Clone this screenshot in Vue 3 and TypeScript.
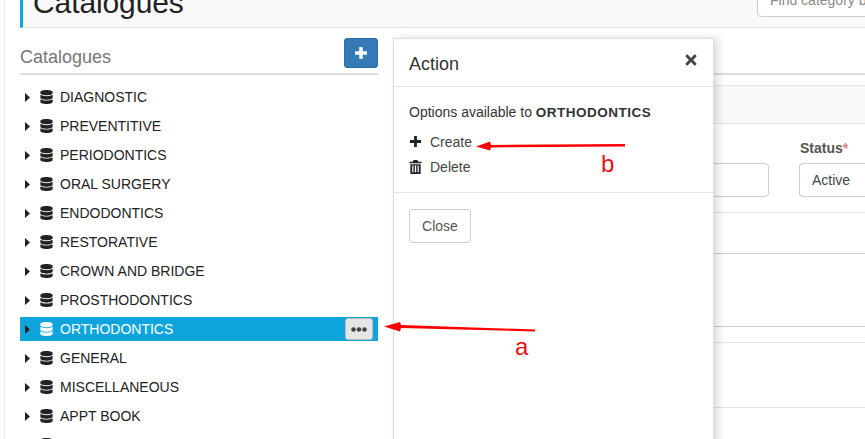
<template>
  <div class="page">
    <header class="page-header">
      <h1>Catalogues</h1>
      <input class="search" type="text" placeholder="Find category by name" />
    </header>

    <div class="columns">
      <aside class="tree">
        <div class="tree__head">
          <h2>Catalogues</h2>
          <button class="btn-add" type="button" aria-label="Add">
            <svg viewBox="0 0 14 14" width="12" height="12"><path d="M5 0h4v5h5v4H9v5H5V9H0V5h5z" fill="#fff" /></svg>
          </button>
        </div>
        <ul class="tree__list">
          <li v-for="item in catalogues" :key="item" class="tree__row" :class="{ 'is-active': item === selected }">
            <svg class="caret" viewBox="0 0 5 9" width="5" height="9"><path d="M0 0l5 4.5L0 9z" /></svg>
            <svg class="db" viewBox="0 0 448 512" width="13" height="14"><path :d="dbPath" /></svg>
            <span class="tree__name">{{ item }}</span>
            <button v-if="item === selected" class="btn-more" type="button" aria-label="More">
              <svg viewBox="0 0 16 5" width="16" height="5"><circle cx="2.5" cy="2.5" r="2.3" /><circle cx="8" cy="2.5" r="2.3" /><circle cx="13.5" cy="2.5" r="2.3" /></svg>
            </button>
          </li>
          <li class="tree__row">
            <svg class="caret" viewBox="0 0 5 9" width="5" height="9"><path d="M0 0l5 4.5L0 9z" /></svg>
            <svg class="db" viewBox="0 0 448 512" width="13" height="14"><path :d="dbPath" /></svg>
          </li>
        </ul>
      </aside>

      <section class="detail">
        <div class="detail__strip"></div>
        <div class="detail__form">
          <div class="field field--name">
            <input type="text" />
          </div>
          <div class="field field--status">
            <label>Status<span>*</span></label>
            <div class="select">Active</div>
          </div>
        </div>
        <div class="detail__block detail__block--a"></div>
        <div class="detail__block detail__block--b"></div>
        <div class="detail__block detail__block--c"></div>
        <div class="detail__block detail__block--d"></div>
      </section>
    </div>

    <div class="action">
      <div class="action__head">
        <span>Action</span>
        <svg viewBox="0 0 352 512" width="12" height="16"><path :d="timesPath" /></svg>
      </div>
      <div class="action__body">
        <p>Options available to <b>ORTHODONTICS</b></p>
        <div class="action__link">
          <svg viewBox="0 0 14 14" width="13" height="13"><path d="M5.5 1h3v4.5H13v3H8.5V13h-3V8.5H1v-3h4.5z" /></svg>
          Create
        </div>
        <div class="action__link">
          <svg viewBox="0 0 13 15" width="13" height="14"><path d="M4.5 0h4l1 2H13v1.5H0V2h3.500zM1 4.500h11V15H1zM3 6v7h1.300V6zm2.800 0v7h1.400V6zm2.900 0v7H10V6z" fill-rule="evenodd" /></svg>
          Delete
        </div>
      </div>
      <div class="action__foot">
        <button type="button">Close</button>
      </div>
    </div>

    <!-- annotations drawn over the screenshot -->
    <svg class="marks" viewBox="0 0 865 439" width="865" height="439">
      <path d="M535 329.5L401 325 400 322 384 326.500 400 331.500 401 328 535 331.500z" fill="#f00" />
      <path d="M625 144L491 145 490 141.500 476 146.500 490 150.500 491 147.500 625 146.500z" fill="#f00" />
    </svg>
    <span class="mark mark--a">a</span>
    <span class="mark mark--b">b</span>
  </div>
</template>

<script setup lang="ts">
const selected = 'ORTHODONTICS';

const catalogues: string[] = [
  'DIAGNOSTIC',
  'PREVENTITIVE',
  'PERIODONTICS',
  'ORAL SURGERY',
  'ENDODONTICS',
  'RESTORATIVE',
  'CROWN AND BRIDGE',
  'PROSTHODONTICS',
  'ORTHODONTICS',
  'GENERAL',
  'MISCELLANEOUS',
  'APPT BOOK',
];

const dbPath =
  'M448 73.143v45.714C448 159.143 347.667 192 224 192S0 159.143 0 118.857V73.143C0 32.857 100.333 0 224 0s224 32.857 224 73.143zM448 176v102.857C448 319.143 347.667 352 224 352S0 319.143 0 278.857V176c48.125 33.143 136.208 48.572 224 48.572S399.874 209.143 448 176zm0 160v102.857C448 479.143 347.667 512 224 512S0 479.143 0 438.857V336c48.125 33.143 136.208 48.572 224 48.572S399.874 369.143 448 336z';

const timesPath =
  'M242.72 256l100.07-100.07c12.28-12.28 12.28-32.19 0-44.48l-22.24-22.24c-12.28-12.28-32.19-12.28-44.48 0L176 189.28 75.93 89.21c-12.28-12.28-32.19-12.28-44.48 0L9.21 111.45c-12.28 12.28-12.28 32.19 0 44.48L109.28 256 9.21 356.07c-12.28 12.28-12.28 32.19 0 44.48l22.24 22.24c12.28 12.28 32.2 12.28 44.48 0L176 322.72l100.07 100.07c12.28 12.28 32.2 12.28 44.48 0l22.24-22.24c12.28-12.28 12.28-32.19 0-44.48L242.72 256z';
</script>

<style>
html,
body {
  margin: 0;
  background: #fff;
  overflow: hidden;
}
</style>

<style scoped>
.page {
  position: relative;
  width: 861px;
  height: 439px;
  overflow: hidden;
  box-sizing: border-box;
  border-left: 1px solid #e7e7e7;
  margin-left: 4px;
  padding-left: 15px;
  font-family: "Liberation Sans", Arial, sans-serif;
  font-size: 14px;
  color: #333;
  background: #fff;
}

.page-header {
  display: flex;
  align-items: flex-end;
  justify-content: space-between;
  height: 28px;
  box-sizing: border-box;
  overflow: hidden;
  padding: 0 0 10px 11px;
  background: #f9f9f9;
  border-left: 3px solid #0fa5dc;
  border-bottom: 1px solid #e3e3e3;
}

.page-header h1 {
  margin: 0 0 -2px -1px;
  font-size: 30px;
  font-weight: 400;
  line-height: 33px;
  letter-spacing: -0.1px;
  color: #222;
}

.search {
  flex: none;
  width: 140px;
  height: 34px;
  box-sizing: border-box;
  margin-right: -32px;
  padding: 6px 12px;
  border: 1px solid #ccc;
  border-radius: 4px;
  font: 14px "Liberation Sans", Arial, sans-serif;
  background: #fff;
}

.search::placeholder {
  color: #8a8a8a;
}

.columns {
  display: grid;
  grid-template-columns: 358px 1fr;
  column-gap: 15px;
  padding-top: 10px;
}

.tree__head {
  display: flex;
  align-items: flex-end;
  justify-content: space-between;
  height: 37px;
  box-sizing: border-box;
  padding-bottom: 5px;
  border-bottom: 2px solid #ddd;
}

.tree__head h2 {
  margin: 0 0 1px;
  font-size: 18px;
  font-weight: 400;
  line-height: 20px;
  color: #777;
}

.btn-add {
  display: flex;
  align-items: center;
  justify-content: center;
  width: 34px;
  height: 30px;
  padding: 0;
  border: 1px solid #2e6da4;
  border-radius: 3px;
  background: #337ab7;
}

.tree__list {
  display: flex;
  flex-direction: column;
  gap: 5px;
  margin: 10px 0 0;
  padding: 0;
  list-style: none;
}

.tree__row {
  display: flex;
  flex: none;
  align-items: center;
  height: 24px;
  padding-left: 5px;
  color: #222;
}

.caret {
  flex: none;
  fill: #222;
}

.db {
  flex: none;
  margin: 0 7px 0 10px;
  fill: #222;
}

.tree__row.is-active {
  background: #0fa5dc;
  color: #fff;
}

.tree__row.is-active .db {
  fill: #fff;
}

.tree__name {
  flex: 1;
}

.btn-more {
  display: flex;
  align-items: center;
  justify-content: center;
  width: 28px;
  height: 22px;
  margin-right: 5px;
  padding: 0;
  border: 1px solid #bbb;
  border-radius: 3px;
  background: #e6e6e6;
  fill: #444;
}

.detail {
  margin-top: 35px;
  border-top: 2px solid #ddd;
}

.detail__strip {
  height: 37px;
  margin-top: 10px;
  background: #f9f9f9;
  border-top: 1px solid #e3e3e3;
  border-bottom: 1px solid #e3e3e3;
}

.detail__form {
  display: flex;
  justify-content: flex-end;
  gap: 30px;
  height: 89px;
  box-sizing: border-box;
  padding-top: 16px;
  border-bottom: 1px solid #e3e3e3;
}

.field--name {
  width: 375px;
  padding-top: 23px;
  box-sizing: border-box;
}

.field--name input {
  width: 100%;
  height: 34px;
  box-sizing: border-box;
  border: 1px solid #ccc;
  border-radius: 4px;
}

.field--status {
  width: 66px;
}

.field--status label {
  display: block;
  height: 23px;
  padding-left: 1px;
  font-weight: 700;
  color: #555;
}

.field--status label span {
  color: #d98880;
}

.select {
  height: 34px;
  box-sizing: border-box;
  padding: 8px 12px;
  border: 1px solid #ccc;
  border-right: 0;
  border-radius: 4px 0 0 4px;
  line-height: 17px;
  color: #444;
}

.detail__block {
  box-sizing: border-box;
}

.detail__block--a {
  height: 41px;
  border-bottom: 1px solid #ccc;
}

.detail__block--b {
  height: 73px;
  border-bottom: 1px solid #ccc;
}

.detail__block--c {
  height: 16px;
  border-bottom: 1px solid #e3e3e3;
}

.detail__block--d {
  height: 65px;
  border-bottom: 1px solid #e3e3e3;
}

/* side dialog, sits over the right column */
.action {
  position: absolute;
  top: 38px;
  left: 388px;
  width: 321px;
  height: 420px;
  box-sizing: border-box;
  background: #fff;
  border: 1px solid #ddd;
  box-shadow: 4px 0 8px rgba(0, 0, 0, 0.14);
}

.action__head {
  display: flex;
  align-items: center;
  justify-content: space-between;
  height: 48px;
  box-sizing: border-box;
  padding: 3px 16px 0 15px;
  border-bottom: 1px solid #e5e5e5;
  font-size: 18px;
  color: #333;
}

.action__head svg {
  margin-top: -8px;
  fill: #444;
}

.action__body {
  height: 106px;
  box-sizing: border-box;
  padding: 17px 15px 0;
  border-bottom: 1px solid #e5e5e5;
  font-size: 14px;
  color: #333;
}

.action__body p {
  margin: 0 0 8px;
  line-height: 17px;
}

.action__body b {
  font-size: 13.5px;
  letter-spacing: 0.5px;
}

.action__link {
  display: flex;
  align-items: center;
  gap: 8px;
  height: 25px;
  color: #444;
  fill: #222;
}

.action__foot {
  padding: 16px 15px;
}

.action__foot button {
  width: 62px;
  height: 34px;
  padding: 0;
  border: 1px solid #ccc;
  border-radius: 3px;
  background: #fff;
  font: 14px "Liberation Sans", Arial, sans-serif;
  color: #555;
}

.marks {
  position: absolute;
  top: 0;
  left: -5px;
  pointer-events: none;
}

.mark {
  position: absolute;
  font-size: 24px;
  line-height: 24px;
  color: #e81010;
}

.mark--a {
  top: 335px;
  left: 510px;
}

.mark--b {
  top: 152px;
  left: 596px;
}
</style>
